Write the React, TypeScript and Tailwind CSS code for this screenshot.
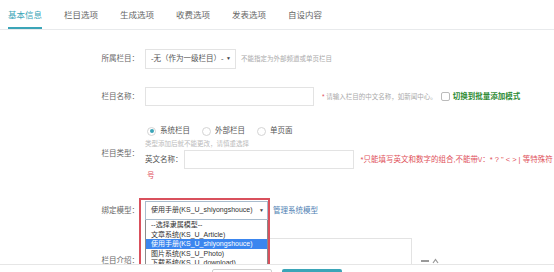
import React from 'react';

const font = "font-['Liberation_Sans','Noto_Sans_CJK_SC',sans-serif]";

const tabs = ['基本信息', '栏目选项', '生成选项', '收费选项', '发表选项', '自设内容'];

const modelOptions = [
  { label: '--选择隶属模型--', active: false },
  { label: '文章系统(KS_U_Article)', active: false },
  { label: '使用手册(KS_U_shiyongshouce)', active: true },
  { label: '图片系统(KS_U_Photo)', active: false },
  { label: '下载系统(KS_U_download)', active: false },
];

const Label = ({ children }: { children: React.ReactNode }) => (
  <div className="w-[145px] shrink-0 pr-[6px] text-right text-[7.5px] leading-[10px] text-[#666]">{children}</div>
);

const Radio = ({ checked, label }: { checked?: boolean; label: string }) => (
  <div className="flex items-center gap-[4px]">
    <span className="flex h-[9px] w-[9px] items-center justify-center rounded-full border border-[#d4d4d4] bg-white">
      {checked && <span className="h-[4px] w-[4px] rounded-full bg-[#3ba5b8]" />}
    </span>
    <span className="text-[7.5px] leading-[10px] text-[#555]">{label}</span>
  </div>
);

export default function App() {
  return (
    <div className={`relative h-[272px] w-[554px] overflow-hidden bg-white ${font}`}>
      {/* tabs */}
      <div className="flex h-[30px] gap-[22px] border-b border-[#e8eaec] pl-[8px]">
        {tabs.map((t, i) => (
          <div
            key={t}
            className={
              i === 0
                ? 'border-b-2 border-[#3ba5b8] pt-[10px] text-[8.5px] leading-[10px] text-[#3ba5b8]'
                : 'pt-[10px] text-[8.5px] leading-[10px] text-[#666]'
            }
          >
            {t}
          </div>
        ))}
      </div>

      <div className="flex flex-col gap-[18px] pt-[19px]">
        {/* 所属栏目 */}
        <div className="flex items-center whitespace-nowrap">
          <Label>所属栏目：</Label>
          <div className="flex h-[20px] w-[91px] items-center justify-between border border-[#e3e3e3] pl-[5px] pr-[4px] text-[7.5px] text-[#555]">
            <span>-无（作为一级栏目）-</span>
            <span className="text-[5px] text-[#444]">▼</span>
          </div>
          <span className="ml-[5px] text-[6.5px] text-[#aaa]">不能指定为外部频道或单页栏目</span>
        </div>

        {/* 栏目名称 */}
        <div className="flex items-center whitespace-nowrap">
          <Label>栏目名称：</Label>
          <div className="h-[19px] w-[169px] border border-[#e3e3e3]" />
          <span className="ml-[8px] text-[6.5px] text-[#aaa]">
            <span className="text-[#e0505a]">*</span> 请输入栏目的中文名称，如新闻中心。
          </span>
          <span className="ml-[4px] h-[9px] w-[9px] rounded-[2px] border border-[#bbb]" />
          <span className="ml-[3px] text-[7.5px] font-bold text-[#2e8b34]">切换到批量添加模式</span>
        </div>

        {/* 栏目类型 */}
        <div className="flex items-center">
          <Label>栏目类型：</Label>
          <div className="flex flex-col">
            <div className="flex h-[14px] items-center gap-[12px] pl-[2px]">
              <Radio checked label="系统栏目" />
              <Radio label="外部栏目" />
              <Radio label="单页面" />
            </div>
            <div className="text-[6.5px] leading-[12px] text-[#bbb]">类型添加后就不能更改，请慎重选择</div>
            <div className="flex h-[19px] items-center whitespace-nowrap">
              <span className="text-[7.5px] text-[#555]">英文名称：</span>
              <span className="ml-[1px] h-[19px] w-[170px] border border-[#e3e3e3]" />
              <span className="ml-[7px] text-[7.5px] text-[#e0505a]">*只能填写英文和数字的组合,不能带\/：* ? " &lt; &gt; | 等特殊符</span>
            </div>
            <div className="pl-[2px] text-[7.5px] leading-[14px] text-[#e0505a]">号</div>
          </div>
        </div>

        {/* 绑定模型 */}
        <div className="relative flex items-center whitespace-nowrap">
          <Label>绑定模型：</Label>
          <div className="flex h-[19px] w-[123px] items-center justify-between border border-[#a9bccd] pl-[5px] pr-[3px] text-[7px] text-[#333]">
            <span>使用手册(KS_U_shiyongshouce)</span>
            <span className="text-[5px] text-[#444]">▼</span>
          </div>
          <span className="ml-[5px] text-[7.5px] text-[#4f7fb3]">管理系统模型</span>

          {/* open list */}
          <div className="absolute left-[145px] top-[19px] z-10 w-[123px] border border-t-0 border-[#8a8a8a] bg-white">
            {modelOptions.map((o) => (
              <div
                key={o.label}
                className={
                  o.active
                    ? 'h-[9.6px] bg-[#3b86ef] pl-[5px] text-[7px] leading-[9.6px] text-white'
                    : 'h-[9.6px] pl-[5px] text-[7px] leading-[9.6px] text-[#333]'
                }
              >
                {o.label}
              </div>
            ))}
          </div>
          {/* annotation box */}
          <div className="absolute left-[139px] top-[-3px] z-20 h-[72px] w-[131px] border-2 border-[#d9505c]" />
        </div>

        {/* 栏目介绍 */}
        <div className="flex items-center">
          <Label>栏目介绍：</Label>
          <div className="h-[46px] w-[267px] border border-[#e3e3e3]" />
          <div className="ml-[9px] flex items-center gap-[3px]">
            <span className="h-[1.5px] w-[8px] bg-[#999]" />
            <svg width="7" height="6" viewBox="0 0 7 6">
              <path d="M1 5 L3.5 1.5 L6 5" fill="none" stroke="#999" strokeWidth="1.2" />
            </svg>
          </div>
        </div>
      </div>

      {/* fixed bottom bar */}
      <div className="absolute bottom-0 left-0 right-0 top-[264px] z-30 flex gap-[10px] border-t border-[#e6e6e6] bg-white pl-[212px] pt-[4px]">
        <div className="h-[20px] w-[60px] rounded-[2px] border border-[#cfcfcf] bg-white" />
        <div className="h-[20px] w-[60px] rounded-[2px] bg-[#3ba5b8]" />
      </div>
    </div>
  );
}
